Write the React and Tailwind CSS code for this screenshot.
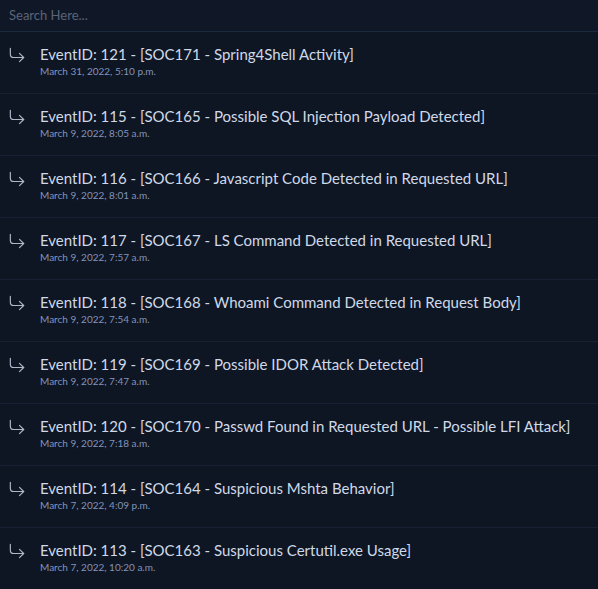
import React from 'react';
import { CornerDownRight } from 'lucide-react';

const events = [
  { id: 121, title: 'SOC171 - Spring4Shell Activity', date: 'March 31, 2022, 5:10 p.m.' },
  { id: 115, title: 'SOC165 - Possible SQL Injection Payload Detected', date: 'March 9, 2022, 8:05 a.m.' },
  { id: 116, title: 'SOC166 - Javascript Code Detected in Requested URL', date: 'March 9, 2022, 8:01 a.m.' },
  { id: 117, title: 'SOC167 - LS Command Detected in Requested URL', date: 'March 9, 2022, 7:57 a.m.' },
  { id: 118, title: 'SOC168 - Whoami Command Detected in Request Body', date: 'March 9, 2022, 7:54 a.m.' },
  { id: 119, title: 'SOC169 - Possible IDOR Attack Detected', date: 'March 9, 2022, 7:47 a.m.' },
  { id: 120, title: 'SOC170 - Passwd Found in Requested URL - Possible LFI Attack', date: 'March 9, 2022, 7:18 a.m.' },
  { id: 114, title: 'SOC164 - Suspicious Mshta Behavior', date: 'March 7, 2022, 4:09 p.m.' },
  { id: 113, title: 'SOC163 - Suspicious Certutil.exe Usage', date: 'March 7, 2022, 10:20 a.m.' },
];

const App = () => {
  return (
    <div className="min-h-screen bg-[#0e1624] font-['Lato','Noto_Sans',sans-serif]">
      <div className="h-[32px] bg-[#101827] border-b border-[#1c2740] flex items-center px-[9px]">
        <input
          type="text"
          placeholder="Search Here..."
          className="w-full bg-transparent outline-none text-[13px] text-[#cbd5e1] placeholder:text-[#5b6478]"
        />
      </div>

      {events.map((ev, i) => (
        <div
          key={ev.id}
          className={`h-[62px] flex items-start pt-[12px] ${i < events.length - 1 ? 'border-b border-[#182033]' : ''}`}
        >
          <div className="w-[40px] pl-[7px] pt-[1px]">
            <CornerDownRight size={20} strokeWidth={1.4} className="text-[#aeb8c9]" />
          </div>
          <div className="flex flex-col">
            <span className="text-[15px] leading-[20px] text-[#d0d9e8]">
              EventID: {ev.id} - [{ev.title}]
            </span>
            <span className="text-[10px] leading-[14px] text-[#8393bb]">{ev.date}</span>
          </div>
        </div>
      ))}
    </div>
  );
};

export default App;
